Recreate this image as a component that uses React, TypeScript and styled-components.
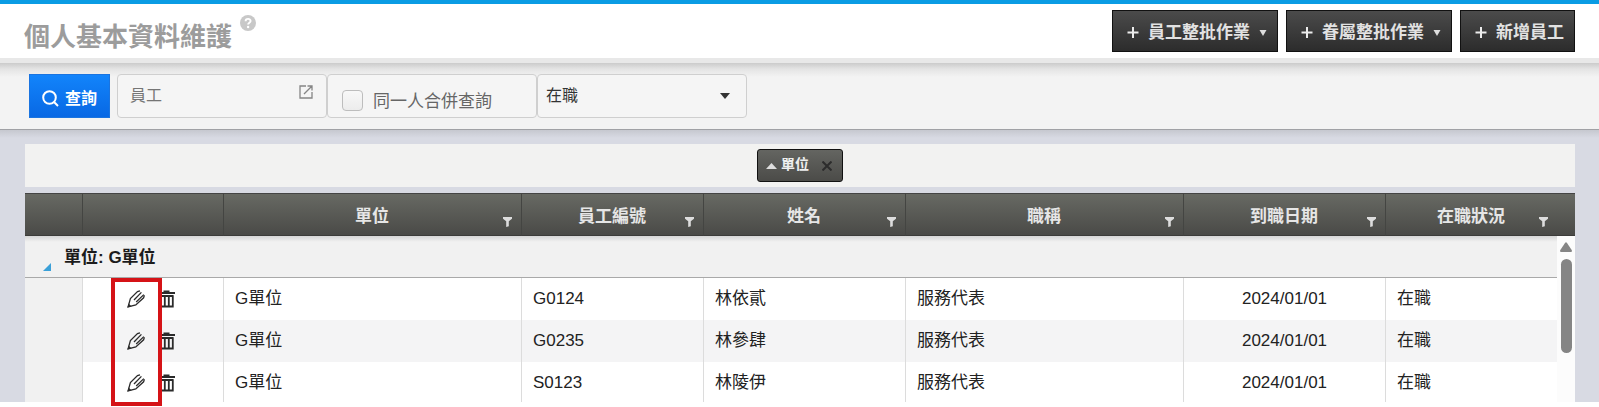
import React from 'react';
import styled, { createGlobalStyle } from 'styled-components';

const Global = createGlobalStyle`
  * { box-sizing: border-box; }
  body {
    margin: 0;
    background: #fff;
    font-family: "Liberation Sans", "Noto Sans CJK TC", sans-serif;
    font-size: 17px;
    color: #222;
  }
  button, input, select { font: inherit; margin: 0; }
`;

const Page = styled.div`
  min-height: 100vh;
  padding-bottom: 5px;
  background: #fff;
`;

const Header = styled.header`
  display: flex;
  justify-content: space-between;
  align-items: center;
  height: 63px;
  padding: 0 24px 0 24px;
  background: #fff;
  border-top: 4px solid #0a9ce4;
  border-bottom: 5px solid #e8e8e8;
`;

const TitleGroup = styled.div`
  display: flex;
  align-items: flex-start;
  gap: 8px;
`;

const Title = styled.h1`
  margin: 0;
  padding-top: 12px;
  font-size: 26px;
  line-height: 36px;
  font-weight: 700;
  color: #9c9c9c;
`;

const HelpButton = styled.button`
  display: flex;
  padding: 8px 0 0;
  border: 0;
  background: none;
`;

const Actions = styled.div`
  display: flex;
  gap: 8px;
`;

const ActionButton = styled.button`
  display: flex;
  align-items: center;
  gap: 9px;
  height: 42px;
  padding: 3px 10px 0 14px;
  border: 1px solid #111;
  background: linear-gradient(#4b4b4b, #2c2c2c);
  color: #e2e2e2;
  line-height: 24px;
  font-weight: 700;
`;

const Filters = styled.form`
  display: flex;
  align-items: flex-start;
  height: 67px;
  padding: 11px 29px;
  background: linear-gradient(#cbcbcb, #e4e4e4 6px, #f3f3f3 14px);
  border-bottom: 1px solid #a0a1a5;
`;

const SearchButton = styled.button`
  display: flex;
  align-items: center;
  justify-content: center;
  gap: 6px;
  width: 81px;
  height: 44px;
  margin-right: 7px;
  padding: 5px 0 0;
  border: 1px solid #1a74e0;
  background: linear-gradient(#1284fb, #0868e4);
  color: #fff;
  font-size: 16px;
  line-height: 24px;
  font-weight: 700;
`;

const Field = styled.div`
  display: flex;
  align-items: center;
  width: 210px;
  height: 44px;
  border: 1px solid #cfcfcf;
  border-radius: 4px;
  background: #f5f5f5;
`;

const TextBox = styled.input`
  flex: 1;
  min-width: 0;
  height: 40px;
  padding: 0 12px;
  border: 0;
  background: none;
  font-size: 16px;
  outline: none;
  &::placeholder { color: #757575; opacity: 1; }
`;

const PickerButton = styled.button`
  display: flex;
  padding: 0 13px 8px 0;
  border: 0;
  background: none;
`;

const CheckLabel = styled.label`
  display: flex;
  align-items: center;
  gap: 10px;
  padding: 8px 0 0 14px;
  line-height: 24px;
  color: #666;
`;

const CheckText = styled.span`
  padding-top: 4px;
`;

const CheckBox = styled.input`
  appearance: none;
  width: 21px;
  height: 21px;
  border: 1px solid #bdbdbd;
  border-radius: 4px;
  background: linear-gradient(#f8f8f8, #ececec);
`;

const StatusSelect = styled.select`
  appearance: none;
  flex: 1;
  height: 42px;
  padding: 0 8px 2px;
  border: 0;
  background: none;
  color: #333;
  font-size: 16px;
  outline: none;
`;

const SelectCaret = styled.svg`
  margin: 0 16px 0 -26px;
  pointer-events: none;
`;

const Main = styled.main`
  padding: 14px 24px 0 25px;
  background: linear-gradient(#c6c8cf, #d8dae3 8px);
`;

const GroupPanel = styled.div`
  display: flex;
  align-items: center;
  justify-content: center;
  height: 43px;
  margin-bottom: 6px;
  padding-bottom: 1px;
  background: #f2f2f1;
`;

const Chip = styled.div`
  display: flex;
  align-items: center;
  gap: 4px;
  height: 33px;
  padding: 0 10px 2px 8px;
  border: 1px solid #111;
  border-radius: 3px;
  background: linear-gradient(#646561, #4b4b48);
  color: #eee;
  font-size: 14px;
  line-height: 20px;
  font-weight: 700;
`;

const ChipArrow = styled.svg`
  margin-top: 4px;
`;

const ChipRemove = styled.button`
  display: flex;
  padding: 4px 0 0 9px;
  border: 0;
  background: none;
`;

const GridFrame = styled.div`
  position: relative;
`;

const GridViewport = styled.div`
  height: 209px;
  overflow: hidden;
`;

const Table = styled.table`
  width: 100%;
  table-layout: fixed;
  border-collapse: separate;
  border-spacing: 0;
`;

const Col = styled.col<{ $w?: number }>`
  width: ${(p) => (p.$w ? `${p.$w}px` : 'auto')};
`;

const HeadRow = styled.tr`
  height: 43px;
  background: linear-gradient(#686a64, #494946);
`;

const HeadCell = styled.th<{ $line?: boolean }>`
  padding: 5px 9px 0 8px;
  border-top: 1px solid #444;
  border-bottom: 1px solid #3c3c3a;
  border-left: ${(p) => (p.$line ? '1px solid #444542' : '0')};
  color: #e6e6e6;
  font-weight: 700;
  line-height: 24px;
`;

const HeadContent = styled.div`
  display: grid;
  grid-template-columns: 1fr auto 1fr;
  align-items: center;
`;

const FilterButton = styled.button`
  grid-column: 3;
  justify-self: end;
  display: flex;
  padding: 9px 0 0;
  border: 0;
  background: none;
`;

const HeadLabel = styled.span`
  grid-column: 2;
`;

const GroupRow = styled.tr`
  height: 42px;
`;

const GroupCell = styled.th`
  padding: 2px 0 0;
  text-align: left;
  background: linear-gradient(#d6d6d6, #f1f1f1 6px);
  border-bottom: 1px solid #a9a9a9;
  color: #1c1c1c;
  line-height: 24px;
`;

const GroupContent = styled.div`
  display: flex;
  align-items: center;
  gap: 13px;
  padding-left: 18px;
`;

const GroupToggle = styled.button`
  display: flex;
  padding: 18px 0 0;
  border: 0;
  background: none;
`;

const Row = styled.tr<{ $alt: boolean }>`
  height: 42px;
  background: ${(p) => (p.$alt ? '#f4f4f5' : '#fff')};
`;

const Cell = styled.td<{ $center?: boolean }>`
  padding: 0 11px;
  border-left: 1px solid #dcdcdc;
  text-align: ${(p) => (p.$center ? 'center' : 'left')};
  line-height: 24px;
`;

const IndentCell = styled.td`
  background: #f1f1f1;
`;

const RowTools = styled.div`
  display: flex;
  justify-content: center;
  gap: 13px;
  padding-right: 4px;
`;

const ToolButton = styled.button`
  display: flex;
  padding: 0;
  border: 0;
  background: none;
`;

const ScrollCell = styled.td`
  padding: 6px 3px 0;
  vertical-align: top;
  background: #fcfcfc;
`;

const ScrollBar = styled.div`
  display: flex;
  flex-direction: column;
  align-items: center;
  gap: 7px;
`;

const ScrollThumb = styled.div`
  width: 11px;
  height: 94px;
  border-radius: 6px;
  background: #858585;
`;

const Highlight = styled.div`
  position: absolute;
  left: 86px;
  top: 85px;
  width: 51px;
  height: 128px;
  border: 4px solid #d51317;
`;

const Plus = () => (
  <svg width="12" height="11" viewBox="0 0 12 11" stroke="#ececec" strokeWidth="2">
    <path d="M6 0v11M.5 5.5h11" />
  </svg>
);

const DownMark = () => (
  <svg width="8" height="6" viewBox="0 0 8 6" fill="#ddd">
    <path d="M.5 0h7L4 6z" />
  </svg>
);

const Funnel = () => (
  <svg width="9" height="10" viewBox="0 0 9 10" fill="#ddd">
    <path d="M0 0h9v1.8L5.8 4.2v5L3.2 10V4.2L0 1.8z" />
  </svg>
);

const Pencil = () => (
  <svg width="18" height="18" viewBox="0 0 18 18" fill="none" stroke="#2b2b2b" strokeWidth="1.3">
    <path d="M13 .8L10.500 1.600L3.400 8.600L1.100 16.800L8.800 15L16.600 7.800L17.400 5.200" />
    <path d="M14.400 2.400L7 10" />
    <path d="M16.800 4.600L9.200 12" />
    <path d="M.4 17.600L1.600 13.600L4.600 16.500z" fill="#2b2b2b" stroke="none" />
  </svg>
);

const Trash = () => (
  <svg width="17" height="18" viewBox="0 0 17 18" fill="none" stroke="#2b2b2b" strokeWidth="1.8">
    <path d="M0 3h17M5.500 1.300h6M2.800 5.500V16.500h12V5.500M2 6h13.500M6.800 6v10M10.800 6v10" />
  </svg>
);

const columns: { label: string; width?: number }[] = [
  { label: '單位' },
  { label: '員工編號', width: 182 },
  { label: '姓名', width: 202 },
  { label: '職稱', width: 278 },
  { label: '到職日期', width: 202 },
  { label: '在職狀況', width: 172 },
];

const rows = [
  { unit: 'G單位', id: 'G0124', name: '林依貳', title: '服務代表', date: '2024/01/01', status: '在職' },
  { unit: 'G單位', id: 'G0235', name: '林參肆', title: '服務代表', date: '2024/01/01', status: '在職' },
  { unit: 'G單位', id: 'S0123', name: '林陵伊', title: '服務代表', date: '2024/01/01', status: '在職' },
];

export default function App() {
  return (
    <Page>
      <Global />
      <Header>
        <TitleGroup>
          <Title>個人基本資料維護</Title>
          <HelpButton type="button" aria-label="說明">
            <svg width="16" height="16" viewBox="0 0 16 16">
              <circle cx="8" cy="8" r="8" fill="#c8c8c8" />
              <path d="M5.600 6.200C5.600 3.200 10.600 3.200 10.600 6C10.600 7.800 8.100 7.700 8.100 9.600" fill="none" stroke="#fff" strokeWidth="1.900" />
              <circle cx="8.100" cy="12" r="1.200" fill="#fff" />
            </svg>
          </HelpButton>
        </TitleGroup>
        <Actions>
          <ActionButton type="button"><Plus />員工整批作業<DownMark /></ActionButton>
          <ActionButton type="button"><Plus />眷屬整批作業<DownMark /></ActionButton>
          <ActionButton type="button"><Plus />新增員工</ActionButton>
        </Actions>
      </Header>
      <Filters onSubmit={(e) => e.preventDefault()}>
        <SearchButton type="submit">
          <svg width="17" height="17" viewBox="0 0 17 17" fill="none" stroke="#fff" strokeWidth="2">
            <circle cx="7.500" cy="7.500" r="6.300" />
            <path d="M11.800 11.800L16 16" />
          </svg>
          查詢
        </SearchButton>
        <Field>
          <TextBox placeholder="員工" aria-label="員工" />
          <PickerButton type="button" aria-label="選擇員工">
            <svg width="14" height="14" viewBox="0 0 14 14" fill="none" stroke="#858585" strokeWidth="1.300">
              <path d="M7 1H1v12h12V7M8.500 1H13v4.500M13 1L5 9" />
            </svg>
          </PickerButton>
        </Field>
        <Field>
          <CheckLabel><CheckBox type="checkbox" /><CheckText>同一人合併查詢</CheckText></CheckLabel>
        </Field>
        <Field>
          <StatusSelect aria-label="在職狀況" defaultValue="在職">
            <option>在職</option>
          </StatusSelect>
          <SelectCaret width="10" height="6" viewBox="0 0 10 6" fill="#333"><path d="M0 0h10L5 6z" /></SelectCaret>
        </Field>
      </Filters>
      <Main>
        <GroupPanel>
          <Chip>
            <ChipArrow width="11" height="6" viewBox="0 0 11 6" fill="#ddd"><path d="M5.500 0L11 6H0z" /></ChipArrow>
            單位
            <ChipRemove type="button" aria-label="移除">
              <svg width="10" height="10" viewBox="0 0 10 10" stroke="#2c2c2c" strokeWidth="2"><path d="M.5 .5l9 9M9.500 .5l-9 9" /></svg>
            </ChipRemove>
          </Chip>
        </GroupPanel>
        <GridFrame>
          <GridViewport>
            <Table>
              <colgroup>
                <Col $w={57} />
                <Col $w={141} />
                {columns.map((c) => <Col key={c.label} $w={c.width} />)}
                <Col $w={18} />
              </colgroup>
              <thead>
                <HeadRow>
                  <HeadCell />
                  <HeadCell $line />
                  {columns.map((c) => (
                    <HeadCell key={c.label} scope="col" $line>
                      <HeadContent>
                        <HeadLabel>{c.label}</HeadLabel>
                        <FilterButton type="button" aria-label={`篩選${c.label}`}><Funnel /></FilterButton>
                      </HeadContent>
                    </HeadCell>
                  ))}
                  <HeadCell />
                </HeadRow>
              </thead>
              <tbody>
                <GroupRow>
                  <GroupCell colSpan={8}>
                    <GroupContent>
                      <GroupToggle type="button" aria-label="收合">
                        <svg width="8" height="8" viewBox="0 0 8 8" fill="#3aa0d8"><path d="M8 0v8H0z" /></svg>
                      </GroupToggle>
                      單位: G單位
                    </GroupContent>
                  </GroupCell>
                  <ScrollCell rowSpan={4}>
                    <ScrollBar>
                      <svg width="12" height="10" viewBox="0 0 12 10" fill="#858585"><path d="M5 1Q6-.5 7 1L12 8.500Q12 10 11 10H1Q0 10 0 8.500z" /></svg>
                      <ScrollThumb />
                    </ScrollBar>
                  </ScrollCell>
                </GroupRow>
                {rows.map((r, i) => (
                  <Row key={r.id} $alt={i % 2 === 1}>
                    <IndentCell />
                    <Cell>
                      <RowTools>
                        <ToolButton type="button" aria-label="編輯"><Pencil /></ToolButton>
                        <ToolButton type="button" aria-label="刪除"><Trash /></ToolButton>
                      </RowTools>
                    </Cell>
                    <Cell>{r.unit}</Cell>
                    <Cell>{r.id}</Cell>
                    <Cell>{r.name}</Cell>
                    <Cell>{r.title}</Cell>
                    <Cell $center>{r.date}</Cell>
                    <Cell>{r.status}</Cell>
                  </Row>
                ))}
              </tbody>
            </Table>
          </GridViewport>
          <Highlight />
        </GridFrame>
      </Main>
    </Page>
  );
}
